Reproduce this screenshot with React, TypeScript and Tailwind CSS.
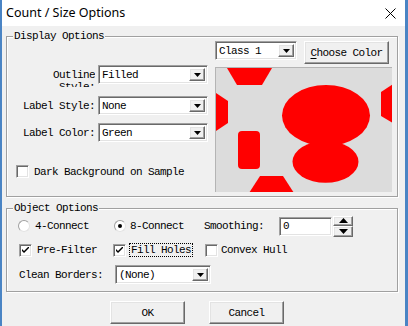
import React from "react";

const mono = "font-['Liberation_Mono',monospace] text-[11px] tracking-[-0.6px] text-black leading-[12px]";
const sunken =
  "border border-t-[#a0a0a0] border-l-[#a0a0a0] border-b-white border-r-white shadow-[inset_1px_1px_0_#696969,inset_-1px_-1px_0_#e3e3e3]";
const raised =
  "border border-t-white border-l-white border-b-[#696969] border-r-[#696969] shadow-[inset_-1px_-1px_0_#a0a0a0,inset_1px_1px_0_#e3e3e3] bg-[#f0f0f0]";

function DownArrow() {
  return (
    <svg width="7" height="4" viewBox="0 0 7 4">
      <polygon points="0,0 7,0 3.5,4" fill="#000" />
    </svg>
  );
}

function Select({ value, w }: { value: string; w: string }) {
  return (
    <div className={`${w} h-[19px] ${sunken} bg-white flex items-stretch p-[2px]`}>
      <div className={`${mono} flex-1 flex items-center pl-[1px] overflow-hidden whitespace-nowrap`}>{value}</div>
      <div className={`w-[16px] ${raised} flex items-center justify-center`}>
        <DownArrow />
      </div>
    </div>
  );
}

function Checkbox({ checked }: { checked: boolean }) {
  return (
    <div className={`w-[13px] h-[13px] ${sunken} bg-white flex items-center justify-center shrink-0`}>
      {checked && (
        <svg width="7" height="7" viewBox="0 0 7 7">
          <path d="M0 2 L0 4 L2 6 L7 1 L7 -1 L2 4 Z" fill="#000" />
        </svg>
      )}
    </div>
  );
}

function Radio({ checked }: { checked: boolean }) {
  return (
    <div className="w-[12px] h-[12px] rounded-full bg-white border border-t-[#a0a0a0] border-l-[#a0a0a0] border-b-[#e3e3e3] border-r-[#e3e3e3] flex items-center justify-center shrink-0">
      {checked && <div className="w-[4px] h-[4px] rounded-full bg-black" />}
    </div>
  );
}

function Group({ label, h, className, children }: { label: string; h: string; className?: string; children: React.ReactNode }) {
  return (
    <div className={`relative ${h} border border-[#a0a0a0] shadow-[inset_1px_1px_0_#fff,1px_1px_0_#fff] ${className ?? ""}`}>
      <div className={`absolute top-[-7px] left-[6px] bg-[#f0f0f0] px-[1px] ${mono}`}>{label}</div>
      {children}
    </div>
  );
}

function Preview() {
  return (
    <div className="mt-[3px] w-[177px] h-[125px] bg-[#dcdcdc] border-t border-l border-[#b4b4b4] overflow-hidden">
      <svg width="177" height="125" viewBox="0 0 177 125">
        <g fill="#ff0000">
          <polygon points="11,0 56,0 46,17 21,17" />
          <polygon points="0,25 12,33 12,55 0,63" />
          <rect x="22" y="63" width="22" height="38" rx="4" />
          <polygon points="44,108 67,108 78,125 33,125" />
          <ellipse cx="110" cy="47.5" rx="44" ry="30.5" />
          <ellipse cx="109.5" cy="93.8" rx="33" ry="21" />
          <polygon points="177,16 177,55 165,48 165,24" />
        </g>
      </svg>
    </div>
  );
}

export default function App() {
  return (
    <div className="w-[408px] h-[326px] bg-[#f0f0f0] border-l-2 border-r-[3px] border-[#4a84c4] flex flex-col overflow-hidden">
      <div className="h-[26px] bg-white flex items-center justify-between pl-[4px] pr-[9px] shrink-0">
        <span className="font-['Noto_Sans',sans-serif] text-[12.5px] text-black leading-none">Count / Size Options</span>
        <svg width="11" height="11" viewBox="0 0 11 11" className="mt-[1px]">
          <path d="M0.5 0.5 L10.5 10.5 M10.5 0.5 L0.5 10.5" stroke="#000" strokeWidth="1" />
        </svg>
      </div>
      <div className="flex flex-col pl-[4px] pr-[7px]">
        <Group label="Display Options" h="h-[161px]" className="mt-[10px]">
          <div className="flex items-start">
            <div className="flex flex-col pt-[28px]">
              <div className="flex items-start">
                <div className={`w-[88px] h-[18px] mt-[4px] overflow-hidden text-right ${mono}`}>
                  Outline
                  <br />
                  Style:
                </div>
                <div className="ml-[3px]">
                  <Select value="Filled" w="w-[110px]" />
                </div>
              </div>
              <div className="flex items-center mt-[9px]">
                <div className={`w-[88px] text-right ${mono}`}>Label Style:</div>
                <div className="ml-[3px]">
                  <Select value="None" w="w-[110px]" />
                </div>
              </div>
              <div className="flex items-center mt-[8px]">
                <div className={`w-[88px] text-right ${mono}`}>Label Color:</div>
                <div className="ml-[3px]">
                  <Select value="Green" w="w-[110px]" />
                </div>
              </div>
              <div className="flex items-center mt-[23px] pl-[9px] gap-[5px]">
                <Checkbox checked={false} />
                <span className={mono}>Dark Background on Sample</span>
              </div>
            </div>
            <div className="flex flex-col pt-[4px] ml-[7px]">
              <div className="flex items-start gap-[7px]">
                <Select value="Class 1" w="w-[82px]" />
                <div className={`w-[85px] h-[23px] ${raised} flex items-center justify-center ${mono}`}>
                  <span>
                    <span className="underline underline-offset-[2px]">C</span>hoose Color
                  </span>
                </div>
              </div>
              <Preview />
            </div>
          </div>
        </Group>

        <Group label="Object Options" h="h-[84px]" className="mt-[11px]">
          <div className="flex flex-col">
            <div className="flex items-center h-[20px] mt-[7px] pl-[11px]">
              <Radio checked={false} />
              <span className={`${mono} ml-[5px]`}>4-Connect</span>
              <div className="ml-[25px]">
                <Radio checked={true} />
              </div>
              <span className={`${mono} ml-[4px]`}>8-Connect</span>
              <span className={`${mono} ml-[20px]`}>Smoothing:</span>
              <div className={`ml-[15px] w-[53px] h-[19px] ${sunken} bg-white flex items-center pl-[3px] ${mono}`}>0</div>
              <div className="ml-[1px] w-[20px] h-[21px] flex flex-col">
                <div className={`flex-1 ${raised} flex items-center justify-center`}>
                  <svg width="9" height="5" viewBox="0 0 9 5">
                    <polygon points="0,5 9,5 4.5,0" fill="#000" />
                  </svg>
                </div>
                <div className={`flex-1 ${raised} flex items-center justify-center`}>
                  <svg width="9" height="5" viewBox="0 0 9 5">
                    <polygon points="0,0 9,0 4.5,5" fill="#000" />
                  </svg>
                </div>
              </div>
            </div>
            <div className="flex items-center h-[18px] mt-[5px] pl-[12px]">
              <Checkbox checked={true} />
              <span className={`${mono} ml-[5px]`}>Pre-Filter</span>
              <div className="ml-[16px]">
                <Checkbox checked={true} />
              </div>
              <span className={`${mono} ml-[3px] px-[1px] border border-dotted border-black`}>Fill Holes</span>
              <div className="ml-[12px]">
                <Checkbox checked={false} />
              </div>
              <span className={`${mono} ml-[3px]`}>Convex Hull</span>
            </div>
            <div className="flex items-center mt-[6px] pl-[12px]">
              <span className={`${mono} w-[96px]`}>Clean Borders:</span>
              <Select value="(None)" w="w-[96px]" />
            </div>
          </div>
        </Group>

        <div className="flex mt-[9px] pl-[104px] gap-[24px]">
          <div className={`w-[75px] h-[23px] ${raised} flex items-center justify-center ${mono}`}>OK</div>
          <div className={`w-[75px] h-[23px] ${raised} flex items-center justify-center ${mono}`}>Cancel</div>
        </div>
      </div>
    </div>
  );
}
